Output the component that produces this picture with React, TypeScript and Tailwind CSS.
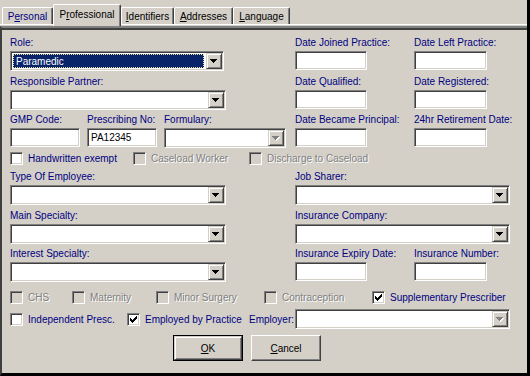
import React from "react";

const sunken =
  "border border-t-[#808080] border-l-[#808080] border-b-white border-r-white shadow-[inset_1px_1px_0_#404040,inset_-1px_-1px_0_#d4d0c8]";
const raised =
  "bg-[#d4d0c8] border border-t-[#d4d0c8] border-l-[#d4d0c8] border-r-[#404040] border-b-[#404040] shadow-[inset_1px_1px_0_#fff,inset_-1px_-1px_0_#808080]";
const disabledText = "text-[#808080] [text-shadow:1px_1px_0_#fff]";

const Label = ({ text }: { text: string }) => (
  <div className="h-[13px] leading-[13px] text-[#000080] whitespace-nowrap">{text}</div>
);

const Arrow = ({ disabled }: { disabled?: boolean }) => (
  <svg width="8" height="5" viewBox="0 0 8 5" shapeRendering="crispEdges">
    {disabled && <path d="M1 1h7L4.5 5z" fill="#fff" />}
    <path d="M0 0h7L3.5 4z" fill={disabled ? "#808080" : "#000"} />
  </svg>
);

const Combo = ({
  className,
  value,
  selected,
  disabled,
}: {
  className: string;
  value?: string;
  selected?: boolean;
  disabled?: boolean;
}) => (
  <div className={`${sunken} ${className} bg-white h-[20px] flex p-[1px]`}>
    <div className="flex-1 min-w-0 flex">
      {selected ? (
        <div className="flex-1 m-[1px] mr-[2px] bg-[#0a246a] text-white border border-dotted border-[#e6dc9a] flex items-center pl-[2px]">
          {value}
        </div>
      ) : (
        <div className="flex-1 flex items-center pl-[3px]">{value}</div>
      )}
    </div>
    <div className={`${raised} w-[16px] h-full flex items-center justify-center`}>
      <Arrow disabled={disabled} />
    </div>
  </div>
);

const Input = ({ className, value }: { className: string; value?: string }) => (
  <div className={`${sunken} ${className} bg-white h-[19px] flex items-center pl-[3px] text-black`}>
    {value}
  </div>
);

const Check = ({
  label,
  checked,
  disabled,
  className = "",
}: {
  label: string;
  checked?: boolean;
  disabled?: boolean;
  className?: string;
}) => (
  <div className={`flex items-center h-[13px] ${className}`}>
    <div
      className={`${sunken} w-[13px] h-[13px] shrink-0 flex items-center justify-center ${
        disabled ? "bg-[#d4d0c8]" : "bg-white"
      }`}
    >
      {checked && (
        <svg width="7" height="7" viewBox="0 0 7 7" shapeRendering="crispEdges">
          <path d="M0 2h1v1h1v1h1V3h1V2h1V1h1V0h1v3H6v1H5v1H4v1H3v1H2V6H1V5H0z" fill="#000" />
        </svg>
      )}
    </div>
    <span className={`ml-[5px] whitespace-nowrap ${disabled ? disabledText : "text-[#000080]"}`}>
      {label}
    </span>
  </div>
);

const Tab = ({
  children,
  className,
  active,
}: {
  children: React.ReactNode;
  className: string;
  active?: boolean;
}) => (
  <div
    className={`${className} relative flex items-center justify-center border-t border-l border-white border-r border-r-[#404040] rounded-t-[2px] shadow-[inset_-1px_0_0_#808080] bg-[#d4d0c8] ${
      active ? "h-[22px] -mb-[2px] pb-[3px] z-10 text-black" : "h-[17px] pt-[1px]"
    }`}
  >
    {children}
  </div>
);

export default function App() {
  return (
    <div className="w-[530px] h-[376px] bg-[#d4d0c8] border-r-[3px] border-r-black flex flex-col overflow-hidden font-['Liberation_Sans',Arial,sans-serif] text-[10px] text-black">
      {/* tab strip */}
      <div className="h-[24px] flex items-end pl-[2px] shrink-0">
        <Tab className="w-[51px] text-[#000080]">
          <span>
            P<u>e</u>rsonal
          </span>
        </Tab>
        <Tab className="w-[68px]" active>
          <span>
            P<u>r</u>ofessional
          </span>
        </Tab>
        <Tab className="w-[53px]">
          <span>
            <u>I</u>dentifiers
          </span>
        </Tab>
        <Tab className="w-[59px]">
          <span>
            <u>A</u>ddresses
          </span>
        </Tab>
        <Tab className="w-[57px]">
          <span>
            <u>L</u>anguage
          </span>
        </Tab>
      </div>

      {/* page */}
      <div className="flex-1 border-t border-t-white pt-px flex flex-col">
        <div className="flex-1 border-t-2 border-l-2 border-b-[3px] border-t-[#808080] border-l-[#404040] border-b-black shadow-[inset_0_2px_0_#404040] pl-[8px] pt-[8px] flex flex-col">
          {/* row A */}
          <div className="flex h-[35px]">
            <div className="w-[285px]">
              <Label text="Role:" />
              <Combo className="w-[214px] mt-[2px]" value="Paramedic" selected />
            </div>
            <div className="w-[119px]">
              <Label text="Date Joined Practice:" />
              <Input className="w-[72px] mt-[2px]" />
            </div>
            <div>
              <Label text="Date Left Practice:" />
              <Input className="w-[73px] mt-[2px]" />
            </div>
          </div>

          {/* row B */}
          <div className="flex h-[35px] mt-[4px]">
            <div className="w-[285px]">
              <Label text="Responsible Partner:" />
              <Combo className="w-[216px] mt-[2px]" />
            </div>
            <div className="w-[119px]">
              <Label text="Date Qualified:" />
              <Input className="w-[72px] mt-[2px]" />
            </div>
            <div>
              <Label text="Date Registered:" />
              <Input className="w-[73px] mt-[2px]" />
            </div>
          </div>

          {/* row C */}
          <div className="flex h-[35px] mt-[3px]">
            <div className="w-[285px] flex gap-[7px]">
              <div>
                <Label text="GMP Code:" />
                <Input className="w-[70px] mt-[2px]" />
              </div>
              <div>
                <Label text="Prescribing No:" />
                <Input className="w-[70px] mt-[2px]" value="PA12345" />
              </div>
              <div>
                <Label text="Formulary:" />
                <Combo className="w-[122px] mt-[2px]" disabled />
              </div>
            </div>
            <div className="w-[119px]">
              <Label text="Date Became Principal:" />
              <Input className="w-[72px] mt-[2px]" />
            </div>
            <div>
              <Label text="24hr Retirement Date:" />
              <Input className="w-[73px] mt-[2px]" />
            </div>
          </div>

          {/* row D */}
          <div className="flex mt-[4px]">
            <Check className="w-[123px]" label="Handwritten exempt" />
            <Check className="w-[116px]" label="Caseload Worker" disabled />
            <Check label="Discharge to Caseload" disabled />
          </div>

          {/* row E */}
          <div className="flex h-[35px] mt-[5px]">
            <div className="w-[285px]">
              <Label text="Type Of Employee:" />
              <Combo className="w-[216px] mt-[2px]" />
            </div>
            <div>
              <Label text="Job Sharer:" />
              <Combo className="w-[215px] mt-[2px]" />
            </div>
          </div>

          {/* row F */}
          <div className="flex h-[35px] mt-[4px]">
            <div className="w-[285px]">
              <Label text="Main Specialty:" />
              <Combo className="w-[216px] mt-[2px]" />
            </div>
            <div>
              <Label text="Insurance Company:" />
              <Combo className="w-[215px] mt-[2px]" />
            </div>
          </div>

          {/* row G */}
          <div className="flex h-[35px] mt-[3px]">
            <div className="w-[285px]">
              <Label text="Interest Specialty:" />
              <Combo className="w-[216px] mt-[2px]" />
            </div>
            <div className="w-[119px]">
              <Label text="Insurance Expiry Date:" />
              <Input className="w-[72px] mt-[2px]" />
            </div>
            <div>
              <Label text="Insurance Number:" />
              <Input className="w-[73px] mt-[2px]" />
            </div>
          </div>

          {/* row H */}
          <div className="flex mt-[9px]">
            <Check className="w-[62px]" label="CHS" disabled />
            <Check className="w-[84px]" label="Maternity" disabled />
            <Check className="w-[108px]" label="Minor Surgery" disabled />
            <Check className="w-[108px]" label="Contraception" disabled />
            <Check label="Supplementary Prescriber" checked />
          </div>

          {/* row I */}
          <div className="flex items-center h-[20px] mt-[5px]">
            <Check className="w-[117px]" label="Independent Presc." />
            <Check className="w-[122px]" label="Employed by Practice" checked />
            <div className="w-[46px] text-[#000080] whitespace-nowrap">Employer:</div>
            <Combo className="w-[215px]" disabled />
          </div>

          {/* row J */}
          <div className="flex gap-[8px] mt-[6px] ml-[163px]">
            <div className="w-[70px] h-[26px] border border-black">
              <div className={`${raised} w-full h-full flex items-center justify-center`}>
                <span>
                  <u>O</u>K
                </span>
              </div>
            </div>
            <div
              className={`w-[70px] h-[26px] bg-[#d4d0c8] border border-t-white border-l-white border-r-[#404040] border-b-[#404040] shadow-[inset_-1px_-1px_0_#808080] flex items-center justify-center`}
            >
              <span>
                <u>C</u>ancel
              </span>
            </div>
          </div>
        </div>
      </div>
    </div>
  );
}
